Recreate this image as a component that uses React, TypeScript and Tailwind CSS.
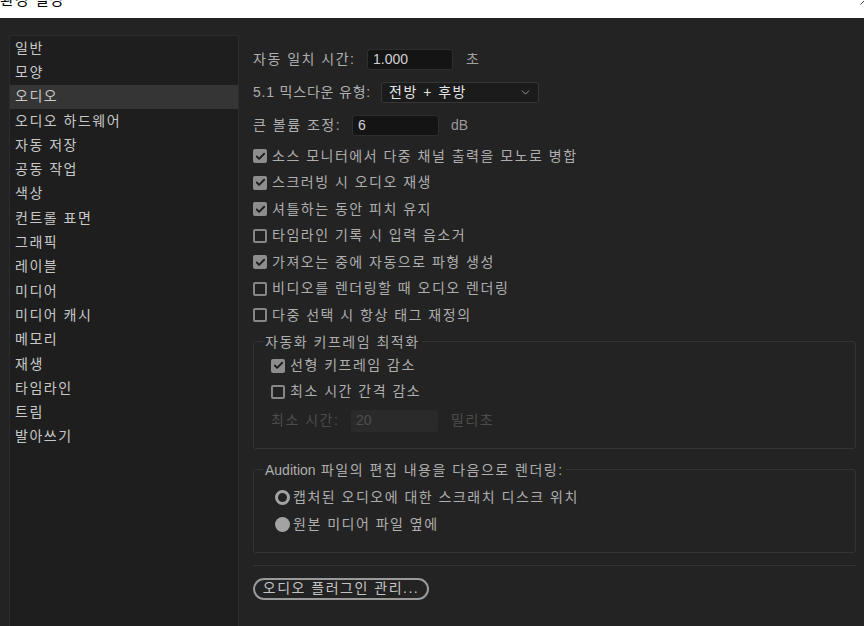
import React from 'react';
import { Check, ChevronDown } from 'lucide-react';

const menuItems = [
  '일반',
  '모양',
  '오디오',
  '오디오 하드웨어',
  '자동 저장',
  '공동 작업',
  '색상',
  '컨트롤 표면',
  '그래픽',
  '레이블',
  '미디어',
  '미디어 캐시',
  '메모리',
  '재생',
  '타임라인',
  '트림',
  '발아쓰기',
];

const checkRows = [
  { label: '소스 모니터에서 다중 채널 출력을 모노로 병합', checked: true },
  { label: '스크러빙 시 오디오 재생', checked: true },
  { label: '셔틀하는 동안 피치 유지', checked: true },
  { label: '타임라인 기록 시 입력 음소거', checked: false },
  { label: '가져오는 중에 자동으로 파형 생성', checked: true },
  { label: '비디오를 렌더링할 때 오디오 렌더링', checked: false },
  { label: '다중 선택 시 항상 태그 재정의', checked: false },
];

const CheckBox: React.FC<{ checked: boolean }> = ({ checked }) =>
  checked ? (
    <span className="flex h-[14px] w-[14px] shrink-0 items-center justify-center rounded-[2px] bg-[#8d8d8d]">
      <Check size={11} strokeWidth={4} color="#1c1c1c" />
    </span>
  ) : (
    <span className="h-[14px] w-[14px] shrink-0 rounded-[2px] border-2 border-[#878787] bg-[#222222]" />
  );

const Radio: React.FC<{ checked: boolean }> = ({ checked }) =>
  checked ? (
    <span className="h-[15px] w-[15px] shrink-0 rounded-full bg-[#a3a3a3]" />
  ) : (
    <span className="h-[15px] w-[15px] shrink-0 rounded-full border-[3px] border-[#a3a3a3]" />
  );

export default function App() {
  return (
    <div
      className="flex h-[626px] w-[864px] flex-col overflow-hidden bg-[#232323] text-[14px] tracking-[1.5px]"
      style={{ fontFamily: '"Liberation Sans", "Noto Sans CJK KR", sans-serif' }}
    >
      {/* title bar, cut off at the top */}
      <div className="flex h-[18px] shrink-0 items-start justify-between overflow-hidden bg-white">
        <span className="-mt-[9px] block text-[15px] leading-[18px] tracking-[1px] text-black">환경 설정</span>
        <svg width="4" height="5" viewBox="0 0 4 5">
          <line x1="0.5" y1="4.5" x2="4" y2="1" stroke="#333" strokeWidth="1" />
        </svg>
      </div>

      <div className="flex flex-1">
        {/* category list */}
        <div className="ml-[9px] mt-[17px] h-[600px] w-[230px] shrink-0 border border-[#2c2c2c] bg-[#1e1e1e]">
          {menuItems.map((item) => (
            <div
              key={item}
              className={
                'flex h-[24.3px] items-center pl-[5px] text-[#c8c8c8] ' +
                (item === '오디오' ? 'bg-[#353535]' : '')
              }
            >
              {item}
            </div>
          ))}
        </div>

        {/* audio settings */}
        <div className="ml-[14px] flex w-[603px] flex-col pt-[31px] text-[#aeaeae]">
          <div className="flex h-[21px] items-center">
            <span className="w-[114px] shrink-0">자동 일치 시간:</span>
            <div className="flex h-[21px] w-[86px] items-center rounded-[3px] border border-[#2e2e2e] bg-[#141414] pl-[5px] tracking-normal text-[#d2d2d2]">
              1.000
            </div>
            <span className="ml-[13px] text-[#a0a0a0]">초</span>
          </div>

          <div className="mt-[12px] flex h-[21px] items-center">
            <span className="w-[128px] shrink-0 tracking-[0.8px]">5.1 믹스다운 유형:</span>
            <div className="flex h-[21px] w-[158px] items-center justify-between rounded-[3px] border border-[#363636] bg-[#1b1b1b] pl-[7px] pr-[6px] text-[#e4e4e4]">
              <span>전방 + 후방</span>
              <ChevronDown size={13} strokeWidth={1.5} color="#b5b5b5" />
            </div>
          </div>

          <div className="mt-[12px] flex h-[21px] items-center">
            <span className="w-[99px] shrink-0">큰 볼륨 조정:</span>
            <div className="flex h-[21px] w-[87px] items-center rounded-[3px] border border-[#2e2e2e] bg-[#141414] pl-[5px] text-[#d2d2d2]">
              6
            </div>
            <span className="ml-[12px] tracking-normal text-[#9a9a9a]">dB</span>
          </div>

          <div className="mt-[7px] flex flex-col">
            {checkRows.map((row) => (
              <div key={row.label} className="flex h-[26.5px] items-center gap-[5px]">
                <CheckBox checked={row.checked} />
                <span>{row.label}</span>
              </div>
            ))}
          </div>

          <fieldset className="mt-[4px] h-[116px] rounded-[3px] border border-[#333333] px-[17px]">
            <legend className="ml-[-8px] px-[2px] leading-[18px] text-[#aeaeae]">자동화 키프레임 최적화</legend>
            <div className="mt-[2px] flex h-[26px] items-center gap-[5px]">
              <CheckBox checked />
              <span>선형 키프레임 감소</span>
            </div>
            <div className="flex h-[26px] items-center gap-[5px]">
              <CheckBox checked={false} />
              <span>최소 시간 간격 감소</span>
            </div>
            <div className="mt-[5px] flex h-[22px] items-center text-[#4c4c4c]">
              <span className="w-[80px] shrink-0">최소 시간:</span>
              <div className="flex h-[22px] w-[87px] items-center rounded-[2px] bg-[#2a2a2a] pl-[5px] tracking-normal text-[#4e4e4e]">
                20
              </div>
              <span className="ml-[13px]">밀리초</span>
            </div>
          </fieldset>

          <fieldset className="mt-[12px] h-[92px] rounded-[3px] border border-[#333333] px-[21px]">
            <legend className="ml-[-12px] px-[2px] leading-[18px] text-[#aeaeae]">
              <span className="tracking-normal">Audition</span> 파일의 편집 내용을 다음으로 렌더링:
            </legend>
            <div className="mt-[5px] flex h-[27px] items-center gap-[3px]">
              <Radio checked={false} />
              <span>캡처된 오디오에 대한 스크래치 디스크 위치</span>
            </div>
            <div className="flex h-[27px] items-center gap-[3px]">
              <Radio checked />
              <span>원본 미디어 파일 옆에</span>
            </div>
          </fieldset>

          <div className="mt-[12px] h-px bg-[#333333]" />

          <div className="mt-[12px] flex">
            <button className="flex h-[22px] w-[176px] items-center justify-center rounded-full border-2 border-[#9a9a9a] text-[#c4c4c4]">
              오디오 플러그인 관리...
            </button>
          </div>
        </div>
      </div>
    </div>
  );
}
